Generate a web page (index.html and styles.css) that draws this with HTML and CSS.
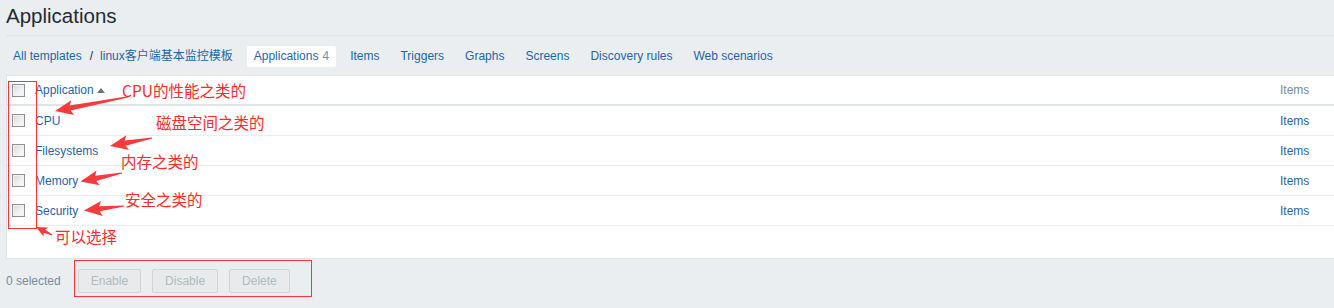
FILE: index.html
```html
<!DOCTYPE html>
<html lang="zh-CN">
<head>
<meta charset="utf-8">
<title>Applications</title>
<link rel="stylesheet" href="styles.css">
</head>
<body>
<div class="page">
  <header class="header"><h1>Applications</h1></header>

  <nav class="tabs">
    <ul>
      <li class="crumb"><a href="#">All templates</a><span class="sep">/</span><a href="#">linux客户端基本监控模板</a></li>
      <li class="active"><a href="#">Applications</a><span class="count">4</span></li>
      <li><a href="#">Items</a></li>
      <li><a href="#">Triggers</a></li>
      <li><a href="#">Graphs</a></li>
      <li><a href="#">Screens</a></li>
      <li><a href="#">Discovery rules</a></li>
      <li><a href="#">Web scenarios</a></li>
    </ul>
  </nav>

  <section class="list">
    <div class="row head">
      <div class="cell check"><span class="cb"></span></div>
      <div class="cell name"><a href="#">Application</a><span class="sort"></span></div>
      <div class="cell items muted">Items</div>
    </div>
    <div class="row">
      <div class="cell check"><span class="cb"></span></div>
      <div class="cell name"><a href="#">CPU</a></div>
      <div class="cell items"><a href="#">Items</a></div>
    </div>
    <div class="row">
      <div class="cell check"><span class="cb"></span></div>
      <div class="cell name"><a href="#">Filesystems</a></div>
      <div class="cell items"><a href="#">Items</a></div>
    </div>
    <div class="row">
      <div class="cell check"><span class="cb"></span></div>
      <div class="cell name"><a href="#">Memory</a></div>
      <div class="cell items"><a href="#">Items</a></div>
    </div>
    <div class="row">
      <div class="cell check"><span class="cb"></span></div>
      <div class="cell name"><a href="#">Security</a></div>
      <div class="cell items"><a href="#">Items</a></div>
    </div>
  </section>

  <footer class="actions">
    <span class="selected">0 selected</span>
    <button class="btn" disabled>Enable</button>
    <button class="btn" disabled>Disable</button>
    <button class="btn" disabled>Delete</button>
  </footer>

  <div class="annot">
    <svg class="marks" width="1334" height="308" viewBox="0 0 1334 308">
      <rect x="8.5" y="81.5" width="28" height="147" fill="none" stroke="#f33" stroke-width="1"/>
      <rect x="74.5" y="260.5" width="237" height="36" fill="none" stroke="#f33" stroke-width="1"/>
      <g fill="#f53b3b">
        <polygon points="0,0 18,-7.5 15.5,-2.6 74.3,-0.6 74.3,0.6 15.5,2.6 18,7.5" transform="translate(55 111) rotate(-10.9)"/>
        <polygon points="0,0 18,-7.5 15.5,-2.6 42.8,-0.6 42.8,0.6 15.5,2.6 18,7.5" transform="translate(110 146) rotate(-10.8)"/>
        <polygon points="0,0 18,-7.5 15.5,-2.6 42.4,-0.6 42.4,0.6 15.5,2.6 18,7.5" transform="translate(80.5 181.5) rotate(-11.6)"/>
        <polygon points="0,0 18,-7.5 15.5,-2.6 40.3,-0.6 40.3,0.6 15.5,2.6 18,7.5" transform="translate(84 210.5) rotate(-6.4)"/>
        <polygon points="0,0 11,-5 9.5,-1.8 18,-0.5 18,0.5 9.5,1.8 11,5" transform="translate(36 227) rotate(26.6)"/>
      </g>
    </svg>
    <span class="note n1">CPU的性能之类的</span>
    <span class="note n2">磁盘空间之类的</span>
    <span class="note n3">内存之类的</span>
    <span class="note n4">安全之类的</span>
    <span class="note n5">可以选择</span>
  </div>
</div>
</body>
</html>
```

FILE: styles.css
```css
* { box-sizing: border-box; }

html, body {
  margin: 0;
  padding: 0;
  background: #ebeef1;
}

body {
  font-family: "Liberation Sans", Arial, "Noto Sans CJK SC", sans-serif;
  font-size: 12px;
  color: #1f2c33;
}

a {
  color: #1f65a6;
  text-decoration: none;
}

.page {
  position: relative;
  width: 1334px;
  height: 308px;
  overflow: hidden;
}

/* header */
.header {
  margin-left: 6px;
  padding: 4px 0 7px;
  border-bottom: 1px solid #dfe4e7;
}

.header h1 {
  margin: 0;
  font-size: 20.5px;
  font-weight: normal;
  line-height: 24px;
  color: #1f2c33;
}

/* tabs */
.tabs ul {
  list-style: none;
  margin: 0;
  padding: 10px 0 8px 6px;
  display: flex;
  gap: 7px;
}

.tabs li {
  height: 21px;
  line-height: 21px;
  padding: 0 7px;
  white-space: nowrap;
  border-radius: 2px;
}

.tabs li.active {
  background: #ffffff;
}

.tabs .sep {
  margin: 0 7px 0 8px;
  color: #1f2c33;
}

.tabs .count {
  margin-left: 4px;
  color: #768d99;
}

/* list */
.list {
  margin-left: 6px;
  background: #ffffff;
  border-top: 1px solid #dfe4e7;
  border-left: 1px solid #dfe4e7;
  border-bottom: 1px solid #dfe4e7;
  padding-bottom: 32px;
}

.row {
  display: grid;
  grid-template-columns: 28px 1fr 54px;
  height: 30px;
  align-items: center;
  border-bottom: 1px solid #ebeef1;
}

.row.head {
  height: 30px;
  border-bottom: 2px solid #dfe4e7;
}

.cell.check {
  padding-left: 5px;
  display: flex;
  align-items: center;
}

.cb {
  display: block;
  width: 13px;
  height: 13px;
  border: 1px solid #8d8f91;
  background: linear-gradient(135deg, #d6d8da 0%, #f0f1f2 60%, #fdfdfd 100%);
  box-shadow: inset 0 0 0 1px #f3f3f3;
}

.cell.name {
  display: flex;
  align-items: center;
}

.sort {
  display: inline-block;
  width: 0;
  height: 0;
  margin-left: 3px;
  border-left: 4px solid transparent;
  border-right: 4px solid transparent;
  border-bottom: 5px solid #66757d;
}

.muted {
  color: #768d99;
}

/* footer actions */
.actions {
  display: flex;
  align-items: center;
  margin-left: 6px;
  padding-top: 10px;
}

.selected {
  color: #768d99;
  margin-right: 17px;
  line-height: 24px;
}

.btn {
  height: 24px;
  padding: 0 12px;
  margin-right: 11px;
  font-family: "Liberation Sans", Arial, sans-serif;
  font-size: 12px;
  color: #aebbc2;
  background: #e8eaec;
  border: 1px solid #cfd5d8;
  border-radius: 2px;
}

/* annotations */
.annot {
  position: absolute;
  left: 0;
  top: 0;
  width: 1334px;
  height: 308px;
  pointer-events: none;
}

.marks {
  position: absolute;
  left: 0;
  top: 0;
}

.note {
  position: absolute;
  font-family: "Noto Sans CJK SC", "Liberation Sans", sans-serif;
  font-size: 15.5px;
  line-height: 16px;
  color: #ff2a2a;
  white-space: nowrap;
}

.n1 { left: 122px; top: 82px; }
.n2 { left: 156px; top: 114px; }
.n3 { left: 121px; top: 153px; }
.n4 { left: 125px; top: 191px; }
.n5 { left: 55px; top: 228px; }
```
